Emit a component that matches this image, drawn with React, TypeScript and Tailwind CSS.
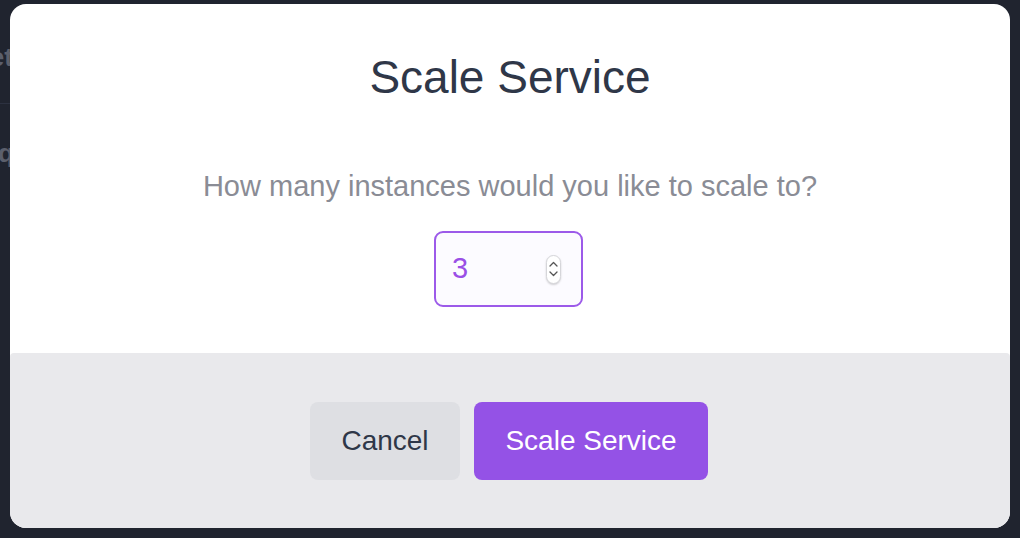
import React from "react";

export default function App() {
  return (
    <div
      className="relative w-[1020px] h-[538px] overflow-hidden bg-[#20242f]"
      style={{ fontFamily: '"Liberation Sans", Arial, sans-serif' }}
    >
      {/* background page fragments peeking out at the left */}
      <div className="absolute right-[1007px] top-[42px] text-[26px] leading-[30px] text-[#5b5f6c] font-bold whitespace-nowrap">Net</div>
      <div className="absolute left-0 top-[103px] w-[10px] h-px bg-[#2c3140]" />
      <div className="absolute right-[1006px] top-[138px] text-[26px] leading-[30px] text-[#5b5f6c] font-bold whitespace-nowrap">q</div>

      <div className="relative z-10 ml-[10px] mt-[4px] w-[1000px] h-[524px] rounded-[16px] bg-white overflow-hidden flex flex-col">
        <div className="flex flex-col items-center pt-[45px] pb-[46px]">
          <h1 className="text-[46px] leading-[56px] text-[#2f3748] font-normal">Scale Service</h1>
          <p className="mt-[63px] text-[29px] leading-[36px] text-[#8a8c95]">
            How many instances would you like to scale to?
          </p>
          <div className="mt-[27px] mr-[3px] w-[149px] h-[76px] rounded-[9px] border-2 border-[#9c5ae9] bg-[#fcfbff] flex items-center pl-[16px] pr-[20px]">
            <span className="flex-1 text-[29px] font-medium text-[#9a4fe6]">3</span>
            <div className="w-[15px] h-[29px] rounded-full bg-white border border-[#d6d6da] shadow-[0_1px_2px_rgba(0,0,0,0.18)] flex flex-col items-center justify-center gap-[4px]">
              <svg width="9" height="6" viewBox="0 0 9 6" fill="none">
                <path d="M1 5 L4.5 1.5 L8 5" stroke="#555" strokeWidth="1.3" strokeLinecap="round" strokeLinejoin="round" />
              </svg>
              <svg width="9" height="6" viewBox="0 0 9 6" fill="none">
                <path d="M1 1 L4.5 4.5 L8 1" stroke="#555" strokeWidth="1.3" strokeLinecap="round" strokeLinejoin="round" />
              </svg>
            </div>
          </div>
        </div>
        <div className="flex-1 bg-[#e9e9ec] rounded-t-[4px] flex items-center justify-center gap-[14px] pr-[2px]">
          <button className="w-[150px] h-[78px] rounded-[8px] bg-[#dedfe3] text-[28px] text-[#2f3748]">
            Cancel
          </button>
          <button className="w-[234px] h-[78px] rounded-[8px] bg-[#9452e6] text-[28px] text-white">
            Scale Service
          </button>
        </div>
      </div>
    </div>
  );
}
